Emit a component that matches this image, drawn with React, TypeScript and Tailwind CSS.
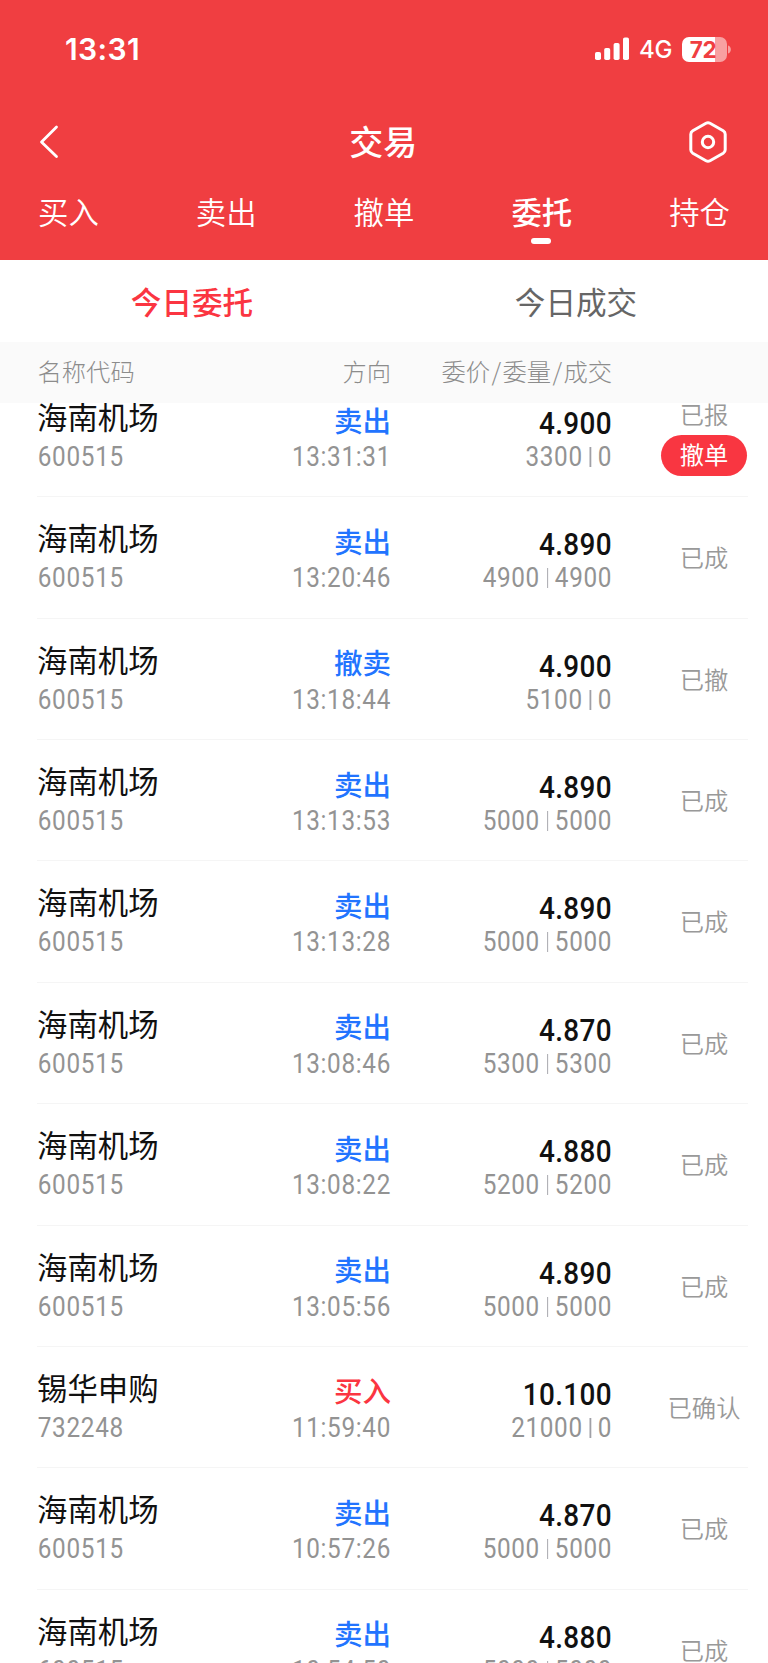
type Order = {
  name: string;
  code: string;
  side: string;
  time: string;
  price: string;
  qty: string;
  filled: string;
  status: string;
  cancellable?: boolean;
};

const hainan = { name: '海南机场', code: '600515' };

const orders: Order[] = [
  { ...hainan, side: '卖出', time: '13:31:31', price: '4.900', qty: '3300', filled: '0', status: '已报', cancellable: true },
  { ...hainan, side: '卖出', time: '13:20:46', price: '4.890', qty: '4900', filled: '4900', status: '已成' },
  { ...hainan, side: '撤卖', time: '13:18:44', price: '4.900', qty: '5100', filled: '0', status: '已撤' },
  { ...hainan, side: '卖出', time: '13:13:53', price: '4.890', qty: '5000', filled: '5000', status: '已成' },
  { ...hainan, side: '卖出', time: '13:13:28', price: '4.890', qty: '5000', filled: '5000', status: '已成' },
  { ...hainan, side: '卖出', time: '13:08:46', price: '4.870', qty: '5300', filled: '5300', status: '已成' },
  { ...hainan, side: '卖出', time: '13:08:22', price: '4.880', qty: '5200', filled: '5200', status: '已成' },
  { ...hainan, side: '卖出', time: '13:05:56', price: '4.890', qty: '5000', filled: '5000', status: '已成' },
  { name: '锡华申购', code: '732248', side: '买入', time: '11:59:40', price: '10.100', qty: '21000', filled: '0', status: '已确认' },
  { ...hainan, side: '卖出', time: '10:57:26', price: '4.870', qty: '5000', filled: '5000', status: '已成' },
  { ...hainan, side: '卖出', time: '10:54:50', price: '4.880', qty: '5000', filled: '5000', status: '已成' },
];

const tabs = ['买入', '卖出', '撤单', '委托', '持仓'];

function StatusBar() {
  return (
    <div className="flex h-[98px] items-center justify-between pl-[65px] pr-[36px] font-['Inter',sans-serif] text-white">
      <span className="text-[30px] font-semibold leading-[40px] tracking-[0.400px]">13:31</span>
      <div className="flex items-center">
        <svg width="35" height="24" viewBox="0 0 35 24" fill="currentColor">
          <rect x="0" y="15" width="6" height="8" rx="1.8" />
          <rect x="9.2" y="11" width="6" height="12" rx="1.8" />
          <rect x="18.6" y="6" width="6" height="17" rx="1.8" />
          <rect x="28" y="0.5" width="6" height="22.500" rx="1.8" />
        </svg>
        <span className="ml-[9.500px] mt-[2px] w-[32.500px] text-[24px] font-medium leading-[30px] tracking-[-0.300px]">4G</span>
        <div className="ml-[10px] flex h-[25px] w-[45px] items-center justify-center rounded-[7px] bg-[linear-gradient(to_right,white_73%,#f8a0a1_73%)] pr-[2px] text-[22.500px] font-bold leading-[25px] tracking-[-0.300px] text-[#f03e41]">
          72
        </div>
        <svg width="4" height="9" viewBox="0 0 4 9" className="ml-[1.500px]">
          <path d="M0 0.500C3.800 1.500 3.800 7.500 0 8.500Z" fill="#f8a0a1" />
        </svg>
      </div>
    </div>
  );
}

function Header() {
  return (
    <header className="h-[259.500px] shrink-0 bg-[#f03e41] text-white">
      <StatusBar />
      <div className="flex h-[88px] items-center justify-between pl-[39px] pr-[40.500px]">
        <svg width="22" height="34" viewBox="0 0 22 34" fill="none" stroke="currentColor" strokeWidth="2.800" strokeLinecap="round" strokeLinejoin="round">
          <path d="M17.500 2L2.500 17L17.500 31.500" />
        </svg>
        <h1 className="mb-[3px] ml-[18px] text-[34px] font-medium leading-[48px]">交易</h1>
        <svg width="40" height="42" viewBox="0 0 40 42" fill="none" stroke="currentColor" strokeWidth="3" strokeLinejoin="round">
          <path d="M18 2.300Q20 1.200 22 2.300L35.200 9.800Q37.200 11 37.200 13.200V28.800Q37.200 31 35.200 32.200L22 39.700Q20 40.800 18 39.700L4.800 32.200Q2.800 31 2.800 28.800V13.200Q2.800 11 4.800 9.800Z" />
          <circle cx="20" cy="21" r="5.700" />
        </svg>
      </div>
      <nav className="flex justify-between px-[38px]">
        {tabs.map((t) => (
          <div key={t} className="flex flex-col items-center">
            <span className={t === '委托' ? 'text-[30.400px] font-medium leading-[51px]' : 'text-[30.400px] font-[350] leading-[51px]'}>{t}</span>
            {t === '委托' && <i className="mr-px mt-px h-[6px] w-[20px] rounded-full bg-white" />}
          </div>
        ))}
      </nav>
    </header>
  );
}

function Row({ o }: { o: Order }) {
  return (
    <li className="ml-[37px] mr-[20.500px] flex h-[121.370px] shrink-0 border-b border-[#f5f5f5]">
      <div className="w-[173px] pt-[20px]">
        <div className="text-[30.400px] leading-[40px] text-[#111111]">{o.name}</div>
        <div className="mt-[2px] origin-left scale-x-90 pl-[0.800px] font-['Roboto',sans-serif] text-[27px] font-[450] leading-[38px] tracking-[0.800px] text-[#939393]">{o.code}</div>
      </div>
      <div className="w-[181px] pt-[23.500px] text-right">
        <div className={o.side === '买入' ? 'text-[28.500px] font-medium leading-[40px] text-[#fb3541]' : 'text-[28.500px] font-medium leading-[40px] text-[#2274ff]'}>{o.side}</div>
        <div className="mt-[1.500px] origin-right scale-x-90 font-['Roboto',sans-serif] text-[27px] font-[450] leading-[32px] tracking-[0.750px] text-[#939393]">{o.time}</div>
      </div>
      <div className="w-[221px] pt-[28px] text-right font-['Roboto',sans-serif]">
        <div className="origin-right scale-x-90 text-[31px] font-medium leading-[40px] tracking-[0.400px] text-[#111111]">{o.price}</div>
        <div className="flex origin-right scale-x-90 items-center justify-end text-[27px] font-[450] leading-[27px] tracking-[0.700px] text-[#939393]">
          <span>{o.qty}</span>
          <i className="mb-px ml-[8px] mr-[7.500px] h-[20px] w-[1.200px] bg-[#a0a0a6]" />
          <span>{o.filled}</span>
        </div>
      </div>
      {o.cancellable ? (
        <div className="ml-[49px] flex w-[86px] shrink-0 flex-col items-center pt-[21px] text-[24.300px]">
          <span className="font-[350] leading-[34px] text-[#999999]">{o.status}</span>
          <button className="mt-[4px] h-[41px] w-[86px] rounded-full bg-[#f93641] pb-[3px] leading-[36px] text-white">撤单</button>
        </div>
      ) : (
        <div className="ml-[49px] flex w-[86px] shrink-0 justify-center pt-[40px] text-[24.300px] font-[350] leading-[40px] text-[#999999]">{o.status}</div>
      )}
    </li>
  );
}

export default function App() {
  return (
    <div className="flex h-[1663px] w-[768px] flex-col overflow-hidden bg-white font-['Noto_Sans_CJK_SC',sans-serif]">
      <Header />
      <div className="grid h-[82px] shrink-0 grid-cols-2 text-center text-[30.600px] leading-[82px]">
        <span className="font-medium text-[#fb3541]">今日委托</span>
        <span className="text-[#666666]">今日成交</span>
      </div>
      <div className="flex h-[61.500px] shrink-0 bg-[#fafafa] pl-[37px] text-[24.300px] font-light leading-[57px] text-[#8c8c8c]">
        <span className="w-[173px] pl-[0.500px]">名称代码</span>
        <span className="w-[181px] text-right">方向</span>
        <span className="w-[221px] text-right">
          委价<span className="px-[1.400px]">/</span>委量<span className="px-[1.400px]">/</span>成交
        </span>
      </div>
      <div className="min-h-0 flex-1 overflow-hidden">
        <ul className="-mt-[27px] flex flex-col">
          {orders.map((o) => (
            <Row key={o.time} o={o} />
          ))}
        </ul>
      </div>
    </div>
  );
}
